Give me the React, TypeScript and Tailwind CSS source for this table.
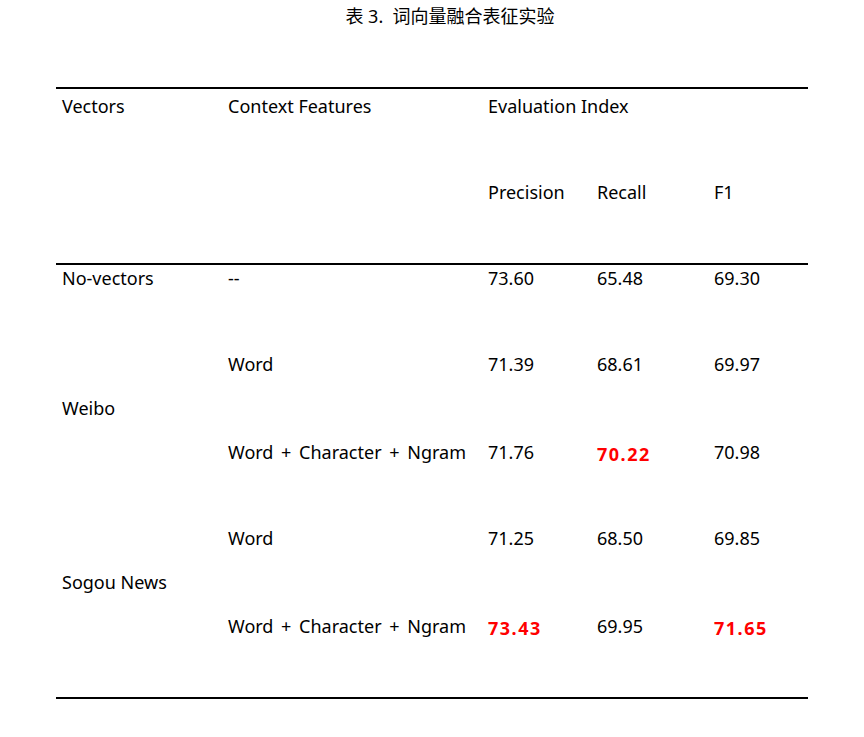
const font = { fontFamily: '"Noto Sans", "Noto Sans CJK SC", sans-serif' };

const cols = "grid grid-cols-[166px_260px_109px_117px_100px]";

const Red = ({ children }: { children: string }) => (
  <span className="font-bold text-[#ff0000] tracking-[1.5px] relative top-[2px]">{children}</span>
);

type Row = { feat: string; p: React.ReactNode; r: React.ReactNode; f: React.ReactNode };

const Group = ({ label, rows }: { label: string; rows: Row[] }) => (
  <div className="grid grid-cols-[166px_586px]">
    <div className="pl-[6px] pt-[46px]">{label}</div>
    <div>
      {rows.map((row, i) => (
        <div key={i} className={`grid grid-cols-[260px_109px_117px_100px] pt-[2px] ${i === 0 ? "h-[88px]" : "h-[86px]"}`}>
          <div className="pl-[6px] [word-spacing:3px]">{row.feat}</div>
          <div className="pl-[6px]">{row.p}</div>
          <div className="pl-[6px]">{row.r}</div>
          <div className="pl-[6px]">{row.f}</div>
        </div>
      ))}
    </div>
  </div>
);

export default function App() {
  return (
    <div className="w-[864px] h-[737px] bg-white text-black text-[18px] leading-[22px]" style={font}>
      <div className="pt-[5px] text-center pl-[36px] text-[18px]">表 3.&nbsp; 词向量融合表征实验</div>
      <div className="mx-[56px] mt-[60px] border-t-2 border-black">
        <div className={`${cols} h-[86px] pt-[6px]`}>
          <div className="pl-[6px]">Vectors</div>
          <div className="pl-[6px]">Context Features</div>
          <div className="pl-[6px] col-span-3">Evaluation Index</div>
        </div>
        <div className={`${cols} h-[88px] pt-[6px]`}>
          <div />
          <div />
          <div className="pl-[6px]">Precision</div>
          <div className="pl-[6px]">Recall</div>
          <div className="pl-[6px]">F1</div>
        </div>
        <div className="border-t-2 border-black">
          <div className={`${cols} h-[86px] pt-[2px]`}>
            <div className="pl-[6px]">No-vectors</div>
            <div className="pl-[6px]">--</div>
            <div className="pl-[6px]">73.60</div>
            <div className="pl-[6px]">65.48</div>
            <div className="pl-[6px]">69.30</div>
          </div>
          <Group
            label="Weibo"
            rows={[
              { feat: "Word", p: "71.39", r: "68.61", f: "69.97" },
              { feat: "Word + Character + Ngram", p: "71.76", r: <Red>70.22</Red>, f: "70.98" },
            ]}
          />
          <Group
            label="Sogou News"
            rows={[
              { feat: "Word", p: "71.25", r: "68.50", f: "69.85" },
              { feat: "Word + Character + Ngram", p: <Red>73.43</Red>, r: "69.95", f: <Red>71.65</Red> },
            ]}
          />
        </div>
        <div className="-mt-[2px] border-t-2 border-black" />
      </div>
    </div>
  );
}
